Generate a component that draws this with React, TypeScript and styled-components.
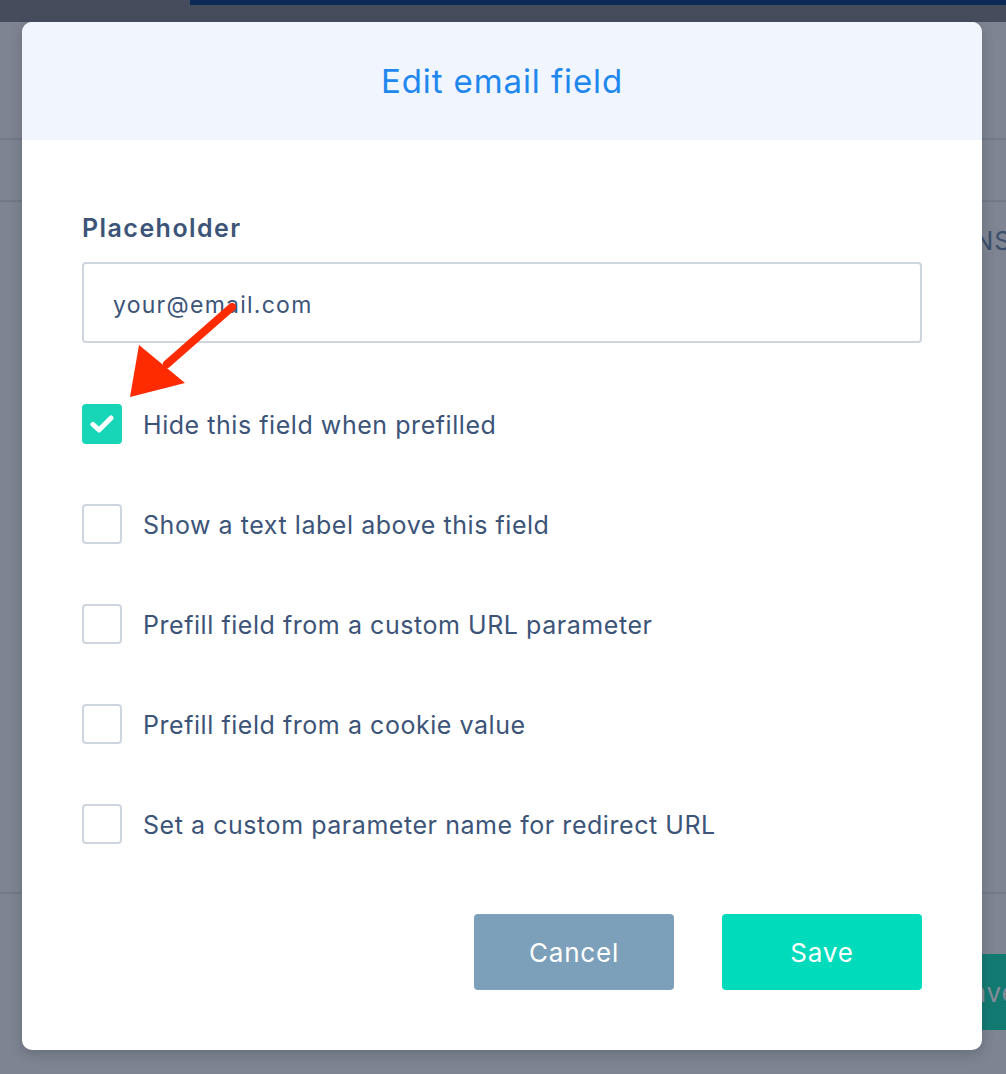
import React from "react";
import styled, { createGlobalStyle } from "styled-components";

const Global = createGlobalStyle`
  html, body { margin: 0; padding: 0; }
  body {
    width: 1006px; height: 1074px; overflow: hidden;
    background: #7e8491;
    font-family: Inter, "Open Sans", "Liberation Sans", sans-serif;
  }
`;

const Page = styled.div`
  position: relative;
  width: 1006px;
  height: 1074px;
  overflow: hidden;
  background: #7e8491;
  display: flex;
  flex-direction: column;
`;

const TopStrip = styled.div`
  height: 22px;
  background: #454d5d;
  display: flex;
  justify-content: flex-end;
`;

const NavyBar = styled.div`
  width: 816px;
  height: 5px;
  background: #0b2a55;
`;

const Band = styled.div<{ $h: number }>`
  height: ${(p) => p.$h}px;
  border-bottom: 2px solid #737987;
  box-sizing: border-box;
  display: flex;
  justify-content: flex-end;
  align-items: flex-start;
`;

const Plain = styled.div<{ $h: number }>`
  height: ${(p) => p.$h}px;
  display: flex;
  justify-content: flex-end;
  align-items: flex-start;
  padding-top: 60px;
  box-sizing: border-box;
`;

const GhostText = styled.span`
  font-size: 26px;
  line-height: 30px;
  color: #3d4f6c;
  margin-top: 24px;
  margin-right: -6px;
  letter-spacing: 1px;
  white-space: nowrap;
`;

const GhostButton = styled.div`
  width: 100px;
  height: 76px;
  margin-right: -40px;
  background: #137a72;
  border-radius: 6px;
  color: #858d98;
  font-size: 26px;
  letter-spacing: 0.8px;
  display: flex;
  align-items: center;
  padding-left: 8px;
  box-sizing: border-box;
  white-space: nowrap;
`;

const Modal = styled.div`
  position: absolute;
  left: 22px;
  top: 22px;
  width: 960px;
  height: 1028px;
  background: #ffffff;
  border-radius: 10px;
  overflow: hidden;
  box-shadow: 0 4px 12px rgba(40, 45, 60, 0.25);
  display: flex;
  flex-direction: column;
`;

const Header = styled.div`
  height: 118px;
  background: #f1f5fe;
  display: flex;
  align-items: center;
  justify-content: center;
  flex-shrink: 0;
`;

const Title = styled.h2`
  margin: 0;
  font-weight: 400;
  font-size: 33px;
  color: #2087ee;
  letter-spacing: 0.9px;
`;

const Body = styled.div`
  position: relative;
  flex: 1;
  padding: 73px 60px 60px;
  display: flex;
  flex-direction: column;
`;

const Label = styled.div`
  font-weight: 600;
  font-size: 25px;
  line-height: 30px;
  letter-spacing: 1.45px;
  color: #3c5478;
  margin-bottom: 19px;
`;

const Input = styled.div`
  height: 81px;
  border: 2px solid #cfd5de;
  border-radius: 4px;
  box-sizing: border-box;
  padding-left: 29px;
  padding-top: 5px;
  display: flex;
  align-items: center;
  font-size: 23px;
  letter-spacing: 1.25px;
  color: #3c5478;
`;

const Options = styled.div`
  margin-top: 61px;
  display: flex;
  flex-direction: column;
  gap: 60px;
`;

const Row = styled.div`
  display: flex;
  align-items: center;
  height: 40px;
  gap: 21px;
`;

const Box = styled.div<{ $checked?: boolean }>`
  width: 40px;
  height: 40px;
  box-sizing: border-box;
  border-radius: 4px;
  border: 2px solid ${(p) => (p.$checked ? "#17d6b8" : "#cfd5de")};
  background: ${(p) => (p.$checked ? "#17d6b8" : "#fff")};
  display: flex;
  align-items: center;
  justify-content: center;
`;

const OptionText = styled.span`
  font-size: 25px;
  line-height: 30px;
  padding-top: 2px;
  letter-spacing: 0.55px;
  color: #3c5478;
`;

const Footer = styled.div`
  margin-top: 70px;
  display: flex;
  justify-content: flex-end;
  gap: 48px;
`;

const Button = styled.button<{ $primary?: boolean }>`
  width: 200px;
  height: 76px;
  border: none;
  border-radius: 4px;
  background: ${(p) => (p.$primary ? "#00dbbb" : "#7ca0ba")};
  color: #ffffff;
  font-family: inherit;
  font-size: 26px;
  letter-spacing: 0.8px;
`;

const Arrow = styled.svg`
  position: absolute;
  left: 0;
  top: 0;
  pointer-events: none;
`;

const options = [
  { text: "Hide this field when prefilled", checked: true },
  { text: "Show a text label above this field" },
  { text: "Prefill field from a custom URL parameter" },
  { text: "Prefill field from a cookie value" },
  { text: "Set a custom parameter name for redirect URL" },
];

export default function App() {
  return (
    <>
      <Global />
      <Page>
        <TopStrip>
          <NavyBar />
        </TopStrip>
        <Band $h={118} />
        <Band $h={62} />
        <Band $h={692}>
          <GhostText>NS</GhostText>
        </Band>
        <Plain $h={180}>
          <GhostButton>Save</GhostButton>
        </Plain>
        <Modal>
          <Header>
            <Title>Edit email field</Title>
          </Header>
          <Body>
            <Label>Placeholder</Label>
            <Input>your@email.com</Input>
            <Options>
              {options.map((o) => (
                <Row key={o.text}>
                  <Box $checked={o.checked}>
                    {o.checked && (
                      <svg width="24" height="20" viewBox="0 0 24 20">
                        <path
                          d="M3 10.5 L9 16 L21 4"
                          fill="none"
                          stroke="#fff"
                          strokeWidth="5"
                          strokeLinecap="round"
                          strokeLinejoin="round"
                        />
                      </svg>
                    )}
                  </Box>
                  <OptionText>{o.text}</OptionText>
                </Row>
              ))}
            </Options>
            <Footer>
              <Button>Cancel</Button>
              <Button $primary>Save</Button>
            </Footer>
          </Body>
          <Arrow width="960" height="1028" viewBox="0 0 960 1028">
            <line x1="210" y1="285" x2="145" y2="342" stroke="#fe2a00" strokeWidth="8" strokeLinecap="round" />
            <polygon points="108,375 117,323 163,361" fill="#fe2a00" />
          </Arrow>
        </Modal>
      </Page>
    </>
  );
}
